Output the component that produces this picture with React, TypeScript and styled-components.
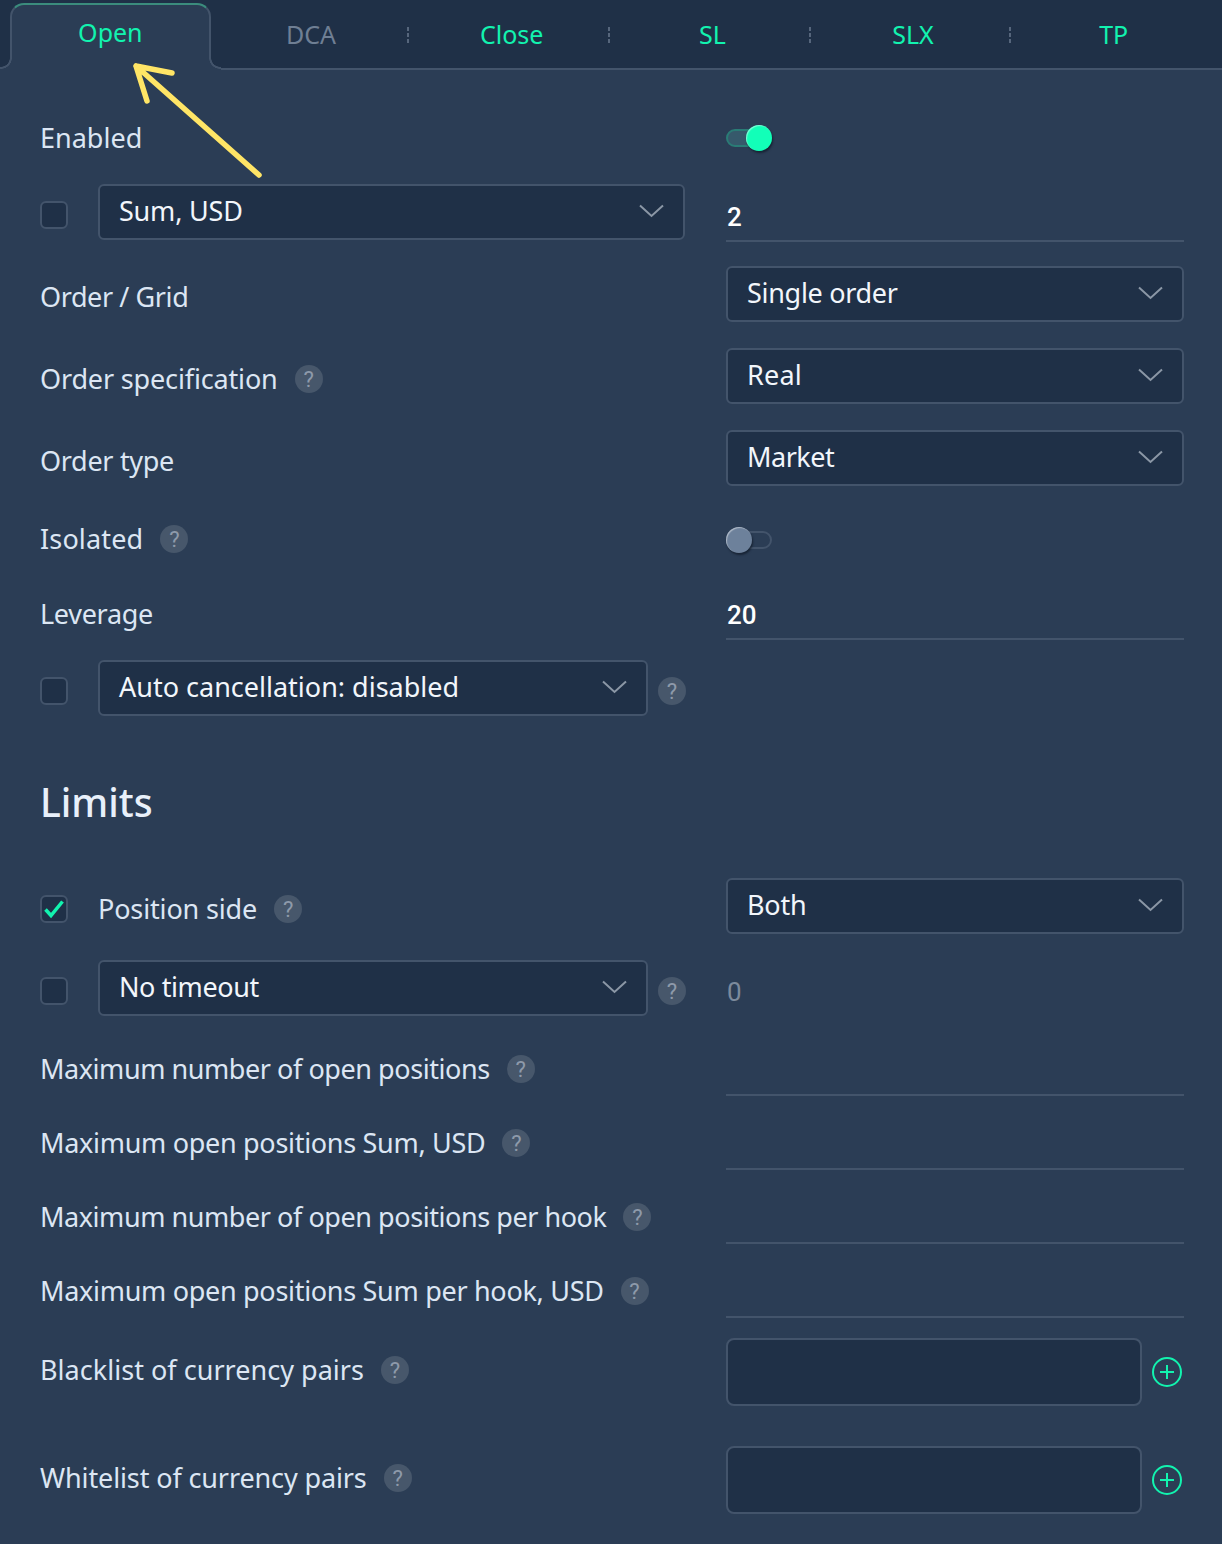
import styled, { createGlobalStyle } from "styled-components"

const GlobalStyle = createGlobalStyle`
  html, body {
    margin: 0;
    padding: 0;
    background: #2b3d55;
  }

  * {
    box-sizing: border-box;
  }
`

const Page = styled.div`
  position: relative;
  width: 1222px;
  height: 1544px;
  overflow: hidden;
  background: #2b3d55;
  font-family: "Noto Sans", "Liberation Sans", sans-serif;
  font-size: 27px;
  color: #dce6f3;
`

const TabBar = styled.div`
  display: flex;
  height: 70px;
  padding: 3px 8px 0 10px;
  background: #1f3047;
  border-bottom: 2px solid #43546b;
`

const Tab = styled.div<{ $active?: boolean; $muted?: boolean; $divider?: boolean }>`
  position: relative;
  flex: 1 1 200px;
  display: flex;
  align-items: center;
  justify-content: center;
  height: ${({ $active }) => ($active ? "67px" : "65px")};
  padding-bottom: ${({ $active }) => ($active ? "11px" : "3px")};
  font-size: 25px;
  color: ${({ $muted }) => ($muted ? "#6f7f94" : "#12f3af")};
  background: ${({ $active }) => ($active ? "#2b3d55" : "transparent")};
  border: ${({ $active }) => ($active ? "2px solid #43546b" : "none")};
  border-top-color: ${({ $active }) => ($active ? "#3b8c7d" : "transparent")};
  border-bottom: none;
  border-radius: 14px 14px 0 0;
  z-index: ${({ $active }) => ($active ? 1 : 0)};

  ${({ $active }) =>
    $active &&
    `
    &::before, &::after {
      content: "";
      position: absolute;
      bottom: 0;
      width: 12px;
      height: 12px;
    }

    &::before {
      left: -12px;
      background: radial-gradient(circle at 1px 0, #1f3047 8.5px, #43546b 9px, #43546b 10.5px, #2b3d55 11px);
    }

    &::after {
      right: -12px;
      background: radial-gradient(circle at calc(100% - 1px) 0, #1f3047 8.5px, #43546b 9px, #43546b 10.5px, #2b3d55 11px);
    }
  `}

  ${({ $divider }) =>
    $divider &&
    `
    &::after {
      content: "";
      position: absolute;
      right: 2px;
      top: 24px;
      width: 2px;
      height: 16px;
      background: repeating-linear-gradient(#56667c 0 4px, transparent 4px 6px);
    }
  `}
`

const Form = styled.div`
  display: flex;
  flex-direction: column;
  padding: 47px 38px 0 40px;
`

const Row = styled.div<{ $height?: number; $top?: number }>`
  display: grid;
  grid-template-columns: 645px 458px;
  column-gap: 41px;
  align-items: center;
  height: ${({ $height }) => $height ?? 56}px;
  margin-top: ${({ $top }) => $top ?? 26}px;
`

// $drop nudges the text below (or, when negative, above) the middle of the row
const Left = styled.div<{ $drop?: number }>`
  display: flex;
  align-items: center;
  height: 100%;
  min-width: 0;
  padding-top: ${({ $drop = 0 }) => Math.max($drop, 0)}px;
  padding-bottom: ${({ $drop = 0 }) => Math.max(-$drop, 0)}px;
`

const Label = styled.span<{ $tight?: number }>`
  white-space: nowrap;
  letter-spacing: ${({ $tight }) => $tight ?? -0.15}px;
`

const Heading = styled.h2`
  margin: 0;
  font-size: 39px;
  font-weight: 500;
  line-height: 50px;
  color: #e8f0fa;
`

const Help = styled.span<{ $beside?: boolean }>`
  flex: none;
  display: inline-flex;
  align-items: center;
  justify-content: center;
  width: 28px;
  height: 28px;
  margin-left: ${({ $beside }) => ($beside ? 10 : 17)}px;
  margin-top: ${({ $beside }) => ($beside ? 6 : 2)}px;
  border-radius: 50%;
  background: #47576b;
  color: #8e9aaa;
  font-family: "Roboto", sans-serif;
  font-size: 22px;
`

const Check = styled.span<{ $checked?: boolean }>`
  flex: none;
  display: flex;
  align-items: center;
  justify-content: center;
  width: 28px;
  height: 28px;
  margin-top: ${({ $checked }) => ($checked ? "2px" : "6px")};
  margin-right: 30px;
  background: #1f3047;
  border: 2px solid #43546b;
  border-radius: 6px;
`

const Select = styled.div<{ $width?: number; $tight?: number }>`
  flex: ${({ $width }) => ($width ? "none" : "1")};
  display: flex;
  align-items: center;
  justify-content: space-between;
  width: ${({ $width }) => ($width ? `${$width}px` : "auto")};
  height: 56px;
  padding: 0 19px 4px 19px;
  letter-spacing: ${({ $tight }) => $tight ?? -0.2}px;
  background: #1f3047;
  border: 2px solid #43546b;
  border-radius: 6px;
  color: #f2f6fb;
`

const ChevronIcon = styled.svg`
  margin-top: 2px;
`

const TextInput = styled.div<{ $muted?: boolean; $line?: boolean; $overhang?: number }>`
  align-self: end;
  display: flex;
  align-items: center;
  height: 48px;
  margin-bottom: ${({ $overhang = 0 }) => -$overhang}px;
  padding-left: 1px;
  font-family: "Roboto", sans-serif;
  font-size: 26px;
  font-weight: ${({ $muted }) => ($muted ? 400 : 500)};
  color: ${({ $muted }) => ($muted ? "#7c8a9c" : "#ffffff")};
  border-bottom: ${({ $line = true }) => ($line ? "2px solid #43546b" : "none")};
`

const ListField = styled.div`
  display: flex;
  align-items: center;
  justify-content: space-between;
  height: 100%;
  padding-right: 2px;
`

const ListBox = styled.div`
  width: 416px;
  height: 68px;
  background: #1f3047;
  border: 2px solid #43546b;
  border-radius: 8px;
`

const Toggle = styled.div<{ $on?: boolean }>`
  position: relative;
  width: 46px;
  height: 18px;
  border: 2px solid ${({ $on }) => ($on ? "#2a7c76" : "#43546b")};
  border-radius: 9px;
  background: ${({ $on }) => ($on ? "#36596b" : "transparent")};
`

const Knob = styled.span<{ $on?: boolean }>`
  position: absolute;
  top: -6px;
  left: ${({ $on }) => ($on ? "18px" : "-2px")};
  width: 26px;
  height: 26px;
  border-radius: 50%;
  background: ${({ $on }) => ($on ? "#12ffb8" : "#6d819b")};
  box-shadow: 1px 2px 2px rgba(15, 25, 40, 0.7), inset 1px 1px 1px rgba(255, 255, 255, 0.45);
`

const Arrow = styled.svg`
  position: absolute;
  top: 0;
  left: 0;
  z-index: 2;
  pointer-events: none;
`

const Chevron = () => (
  <ChevronIcon width="25" height="14" viewBox="0 0 25 14" fill="none">
    <path d="M1 1.5 12.5 12 24 1.5" stroke="#8b97a6" strokeWidth="2" />
  </ChevronIcon>
)

const Plus = () => (
  <svg width="30" height="30" viewBox="0 0 30 30" fill="none" stroke="#12f3af" strokeWidth="2">
    <circle cx="15" cy="15" r="14" />
    <path d="M15 8v14M8 15h14" />
  </svg>
)

const tabs = [
  { name: "Open", active: true },
  { name: "DCA", muted: true, divider: true },
  { name: "Close", divider: true },
  { name: "SL", divider: true },
  { name: "SLX", divider: true },
  { name: "TP" },
]

const limits = [
  { label: "Maximum number of open positions", tight: -0.44 },
  { label: "Maximum open positions Sum, USD", tight: -0.3 },
  { label: "Maximum number of open positions per hook", tight: -0.44 },
  { label: "Maximum open positions Sum per hook, USD", tight: -0.3 },
]

const App = () => (
  <Page>
    <GlobalStyle />
    <TabBar>
      {tabs.map((tab) => (
        <Tab key={tab.name} $active={tab.active} $muted={tab.muted} $divider={tab.divider}>
          {tab.name}
        </Tab>
      ))}
    </TabBar>

    <Form>
      <Row $height={42} $top={0}>
        <Left $drop={-2}>
          <Label $tight={0}>Enabled</Label>
        </Left>
        <Toggle $on>
          <Knob $on />
        </Toggle>
      </Row>
      <Row $top={25}>
        <Left>
          <Check />
          <Select>
            Sum, USD
            <Chevron />
          </Select>
        </Left>
        <TextInput $overhang={2}>2</TextInput>
      </Row>
      <Row>
        <Left $drop={4}>
          <Label $tight={-0.4}>Order / Grid</Label>
        </Left>
        <Select $tight={-0.3}>
          Single order
          <Chevron />
        </Select>
      </Row>
      <Row>
        <Left $drop={4}>
          <Label>Order specification</Label>
          <Help>?</Help>
        </Left>
        <Select $tight={0.2}>
          Real
          <Chevron />
        </Select>
      </Row>
      <Row>
        <Left $drop={4}>
          <Label $tight={-0.3}>Order type</Label>
        </Left>
        <Select $tight={-0.5}>
          Market
          <Chevron />
        </Select>
      </Row>
      <Row $height={50} $top={29}>
        <Left $drop={-4}>
          <Label $tight={0.15}>Isolated</Label>
          <Help>?</Help>
        </Left>
        <Toggle>
          <Knob />
        </Toggle>
      </Row>
      <Row $height={48} $top={27}>
        <Left $drop={-6}>
          <Label $tight={-0.3}>Leverage</Label>
        </Left>
        <TextInput>20</TextInput>
      </Row>
      <Row $top={20}>
        <Left>
          <Check />
          <Select $width={550} $tight={0}>
            Auto cancellation: disabled
            <Chevron />
          </Select>
          <Help $beside>?</Help>
        </Left>
      </Row>

      <Row $height={50} $top={61}>
        <Heading>Limits</Heading>
      </Row>

      <Row $top={51}>
        <Left $drop={4}>
          <Check $checked>
            <svg width="22" height="20" viewBox="0 0 22 20" fill="none">
              <path d="M2.5 10.5 8 16.5 19.5 2.5" stroke="#12f3af" strokeWidth="3.5" />
            </svg>
          </Check>
          <Label>Position side</Label>
          <Help>?</Help>
        </Left>
        <Select>
          Both
          <Chevron />
        </Select>
      </Row>
      <Row>
        <Left>
          <Check />
          <Select $width={550} $tight={-0.4}>
            No timeout
            <Chevron />
          </Select>
          <Help $beside>?</Help>
        </Left>
        <TextInput $muted $line={false}>
          0
        </TextInput>
      </Row>
      {limits.map(({ label, tight }, index) => (
        <Row key={label} $height={54} $top={index === 0 ? 26 : 20}>
          <Left $drop={-2}>
            <Label $tight={tight}>{label}</Label>
            <Help>?</Help>
          </Left>
          <TextInput />
        </Row>
      ))}
      <Row $height={68} $top={20}>
        <Left $drop={-6}>
          <Label $tight={0.03}>Blacklist of currency pairs</Label>
          <Help>?</Help>
        </Left>
        <ListField>
          <ListBox />
          <Plus />
        </ListField>
      </Row>
      <Row $height={68} $top={40}>
        <Left $drop={-6}>
          <Label $tight={-0.12}>Whitelist of currency pairs</Label>
          <Help>?</Help>
        </Left>
        <ListField>
          <ListBox />
          <Plus />
        </ListField>
      </Row>
    </Form>

    <Arrow width="300" height="200" viewBox="0 0 300 200" fill="none">
      <path
        d="M259 175 136 66M172 73 136 66 147 101"
        stroke="#ffe566"
        strokeWidth="5.5"
        strokeLinecap="round"
        strokeLinejoin="round"
      />
    </Arrow>
  </Page>
)

export default App
